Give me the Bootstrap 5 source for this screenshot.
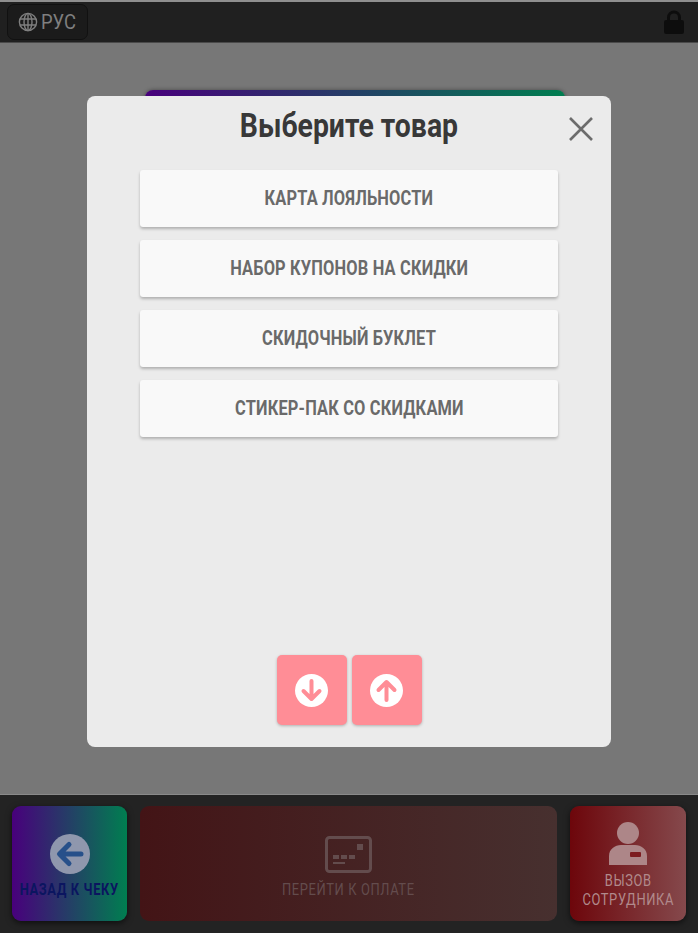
<!DOCTYPE html>
<html lang="ru">
<head>
    <meta charset="UTF-8">
    <meta name="viewport" content="width=device-width, initial-scale=1.0">
    <title>kiosk</title>
    <link rel="stylesheet" href="https://cdn.jsdelivr.net/npm/bootstrap@5.3.7/dist/css/bootstrap.min.css">
    <style>
        html, body { height: 933px; overflow: hidden; }
        body { background: #777; font-family: Roboto, "Liberation Sans", sans-serif; }
        .kiosk { height: 933px; }
        .narrow-txt { display: inline-block; white-space: nowrap; transform-origin: center; }
        .top-line { height: 2px; background: #8f8f8f; }
        .top-bar { height: 41px; background: #202020; border-bottom: 1px solid #4a4a4a; padding: 3px 13px 3px 7px; }
        .lang-btn { height: 36px; width: 81px; background: #1b1b1b; border: 1px solid #111; border-radius: 7px; color: #7f7f7f; font-size: 20px; padding: 0 0 0 10px; gap: 3px; }
        .lang-txt { transform: scaleX(.92); transform-origin: left center; }
        .main-area { flex: 1 1 auto; padding-top: 47px; background: #777; }
        .back-card { width: 420px; height: 40px; margin-left: 145px; border-radius: 8px; background: linear-gradient(90deg, #48007c, #007e50); box-shadow: 0 0 4px rgba(0,0,0,.4); }
        .bottom-bar { height: 139px; background: #232323; border-top: 1px solid #8a8a8a; padding: 11px 12px 12px; gap: 13px; }
        .foot-btn { height: 115px; border-radius: 9px; border: 0; box-shadow: 0 2px 6px rgba(0,0,0,.6); font-size: 17px; line-height: 19px; letter-spacing: .8px; padding-left: 0; padding-right: 0; }
        .foot-btn .narrow-txt { transform: scaleX(.76); }
        .foot-back { width: 115px; background: linear-gradient(90deg, #48007c, #007e50); color: #0b1560; font-weight: 700; padding-top: 28px; gap: 6px; }
        .foot-pay { flex: 1 1 auto; background: linear-gradient(90deg, #431416, #47302f); color: #634c4d; box-shadow: none; padding-top: 30px; gap: 7px; }
        .foot-call { width: 116px; background: linear-gradient(90deg, #6d060b, #85494c); color: #b18a8c; padding-top: 16px; gap: 6px; }
        .pick-modal { position: absolute; left: 87px; top: 96px; width: 524px; height: 651px; background: #ebebeb; border-radius: 8px; padding: 0 53px 22px; }
        .pick-title { height: 60px; margin: 0; font-weight: 700; font-size: 33px; color: #383838; }
        .pick-title .narrow-txt { transform: scaleX(.86); }
        .pick-close { position: absolute; right: 17px; top: 20px; background: none; border: 0; padding: 0; line-height: 0; }
        .pick-list { margin-top: 14px; gap: 13px; }
        .pick-item { height: 57px; background: #f9f9f9; border: 0; border-radius: 3px; box-shadow: 0 2px 3px rgba(0,0,0,.25); color: #6a6a6a; font-weight: 700; font-size: 20px; letter-spacing: .2px; padding-bottom: 3px; }
        .pick-item .narrow-txt { transform: scaleX(.82); }
        .page-btn { width: 70px; height: 70px; background: #ff8d96; border: 0; border-radius: 5px; box-shadow: 0 1px 3px rgba(0,0,0,.25); padding: 0 2px 0 0; }
        .pick-pager { gap: 5px; margin-left: 1px; }
    </style>
</head>

<body>
    <div class="kiosk d-flex flex-column">
        <div class="top-line"></div>
        <div class="top-bar d-flex justify-content-between align-items-center">
            <button class="lang-btn d-flex align-items-center">
                <svg width="20" height="20" viewBox="0 0 20 20" fill="none" stroke="#7f7f7f" stroke-width="1.4">
                    <circle cx="10" cy="10" r="8.6"/>
                    <ellipse cx="10" cy="10" rx="4" ry="8.6"/>
                    <path d="M10 1.4v17.2M2 7h16M2 13h16"/>
                </svg>
                <span class="narrow-txt lang-txt">РУС</span>
            </button>
            <svg width="22" height="25" viewBox="0 0 22 25">
                <path d="M5.500 11V7.500a5.500 5.500 0 0 1 11 0V11" fill="none" stroke="#0d0d0d" stroke-width="3"/>
                <rect x="1" y="10" width="20" height="14" rx="2" fill="#0d0d0d"/>
            </svg>
        </div>

        <div class="main-area">
            <div class="back-card"></div>
        </div>

        <div class="bottom-bar d-flex">
            <button class="foot-btn foot-back d-flex flex-column align-items-center">
                <svg width="40" height="40" viewBox="0 0 40 40">
                    <circle cx="20" cy="20" r="20" fill="#8f97ad"/>
                    <path d="M31 20H10M19 10.500 9.500 20l9.500 9.500" fill="none" stroke="#27508a" stroke-width="5" stroke-linecap="round" stroke-linejoin="round"/>
                </svg>
                <span class="narrow-txt">НАЗАД К ЧЕКУ</span>
            </button>
            <button class="foot-btn foot-pay d-flex flex-column align-items-center">
                <svg width="47" height="37" viewBox="0 0 47 37" fill="none">
                    <rect x="1.500" y="1.500" width="44" height="34" rx="3" stroke="#634c4d" stroke-width="3"/>
                    <rect x="8" y="19" width="6" height="4" fill="#634c4d"/>
                    <rect x="16" y="19" width="6" height="4" fill="#634c4d"/>
                    <rect x="24" y="19" width="6" height="4" fill="#634c4d"/>
                    <rect x="32" y="8" width="6" height="6" fill="#634c4d"/>
                    <rect x="8" y="26" width="12" height="2" fill="#634c4d"/>
                </svg>
                <span class="narrow-txt">ПЕРЕЙТИ К ОПЛАТЕ</span>
            </button>
            <button class="foot-btn foot-call d-flex flex-column align-items-center">
                <svg width="38" height="43" viewBox="0 0 38 43">
                    <circle cx="19" cy="11" r="11" fill="#ad8688"/>
                    <path d="M0 43V34C0 27 6 23 12 23H26C32 23 38 27 38 34V43Z" fill="#ad8688"/>
                    <rect x="21" y="30" width="11" height="5" rx="1" fill="#7d1c20"/>
                </svg>
                <span class="narrow-txt">ВЫЗОВ<br>СОТРУДНИКА</span>
            </button>
        </div>
    </div>

    <div class="pick-modal d-flex flex-column">
        <h2 class="pick-title d-flex align-items-center justify-content-center"><span class="narrow-txt">Выберите товар</span></h2>
        <button class="pick-close" aria-label="Закрыть">
            <svg width="26" height="26" viewBox="0 0 26 26" stroke="#6c6c6c" stroke-width="2.600" fill="none">
                <path d="M2 2l22 22M24 2 2 24"/>
            </svg>
        </button>
        <div class="pick-list d-flex flex-column">
            <button class="pick-item"><span class="narrow-txt">КАРТА ЛОЯЛЬНОСТИ</span></button>
            <button class="pick-item"><span class="narrow-txt">НАБОР КУПОНОВ НА СКИДКИ</span></button>
            <button class="pick-item"><span class="narrow-txt">СКИДОЧНЫЙ БУКЛЕТ</span></button>
            <button class="pick-item"><span class="narrow-txt">СТИКЕР-ПАК СО СКИДКАМИ</span></button>
        </div>
        <div class="pick-pager d-flex justify-content-center mt-auto">
            <button class="page-btn d-flex align-items-center justify-content-center">
                <svg width="33" height="33" viewBox="0 0 33 33">
                    <circle cx="16.500" cy="16.500" r="16.500" fill="#fff"/>
                    <path d="M16.500 7v17M8.500 17l8 8 8-8" fill="none" stroke="#ff8d96" stroke-width="4" stroke-linecap="round" stroke-linejoin="round"/>
                </svg>
            </button>
            <button class="page-btn d-flex align-items-center justify-content-center">
                <svg width="33" height="33" viewBox="0 0 33 33">
                    <circle cx="16.500" cy="16.500" r="16.500" fill="#fff"/>
                    <path d="M16.500 26V9M8.500 16l8-8 8 8" fill="none" stroke="#ff8d96" stroke-width="4" stroke-linecap="round" stroke-linejoin="round"/>
                </svg>
            </button>
        </div>
    </div>

    <script src="https://cdn.jsdelivr.net/npm/bootstrap@5.3.7/dist/js/bootstrap.bundle.min.js"></script>
</body>
</html>
